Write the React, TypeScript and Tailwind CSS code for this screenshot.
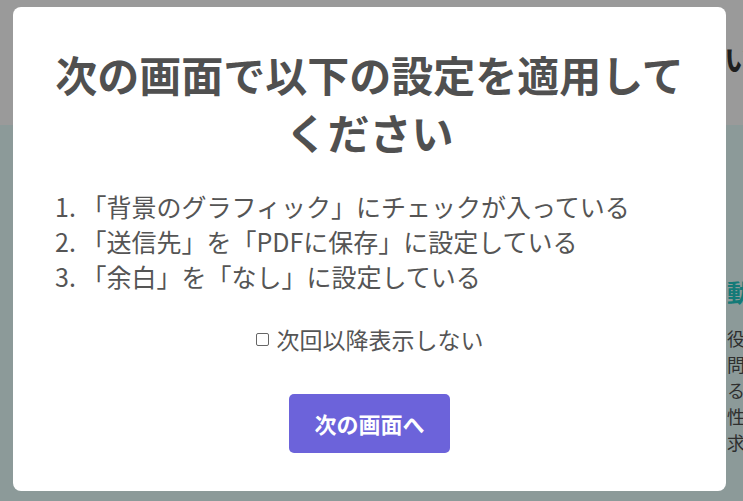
import React from 'react'

const steps = [
  '「背景のグラフィック」にチェックが入っている',
  '「送信先」を「PDFに保存」に設定している',
  '「余白」を「なし」に設定している',
]

const font = "font-['Noto_Sans_CJK_JP','Noto_Sans',sans-serif]"

const App = () => {
  return (
    <div className={`relative w-[743px] h-[501px] overflow-hidden bg-[#9a9a9a] ${font}`}>
      {/* page behind the overlay */}
      <div className="flex flex-col h-full">
        <div className="h-[125px] pl-[724px] pt-[36px] whitespace-nowrap">
          <span className="text-[30px] font-bold text-[#1f1f1f]">い</span>
        </div>
        <div className="flex-1 bg-[#8c9a99] pl-[727px] pt-[152px] whitespace-nowrap">
          <div className="text-[24px] font-bold text-[#147a78] leading-[30px]">動</div>
          <div className="mt-[18px] flex flex-col text-[18px] leading-[26px] text-[#2e2e2e]">
            <span>役</span>
            <span>問</span>
            <span>る</span>
            <span>性</span>
            <span>求</span>
          </div>
        </div>
      </div>

      {/* modal */}
      <div className="absolute left-[13px] top-[7px] w-[713px] h-[484px] bg-white rounded-[8px] px-[42px] pt-[38px]">
        <h2 className="text-center text-[42px] font-bold leading-[58px] text-[#505050]">
          次の画面で以下の設定を適用してください
        </h2>
        <div className="mt-[28px] text-[25px] leading-[35px] text-[#555]">
          {steps.map((s, i) => (
            <p key={i}>
              {i + 1}. {s}
            </p>
          ))}
        </div>
        <label className="mt-[30px] flex items-center justify-center gap-[8px] text-[23px] leading-[30px] text-[#555]">
          <span className="w-[13px] h-[13px] border border-[#666] rounded-[2px]" />
          <span>次回以降表示しない</span>
        </label>
        <div className="mt-[40px] flex justify-center">
          <button className="w-[161px] h-[59px] rounded-[5px] bg-[#6c63da] text-white text-[22px] font-bold">
            次の画面へ
          </button>
        </div>
      </div>
    </div>
  )
}

export default App
